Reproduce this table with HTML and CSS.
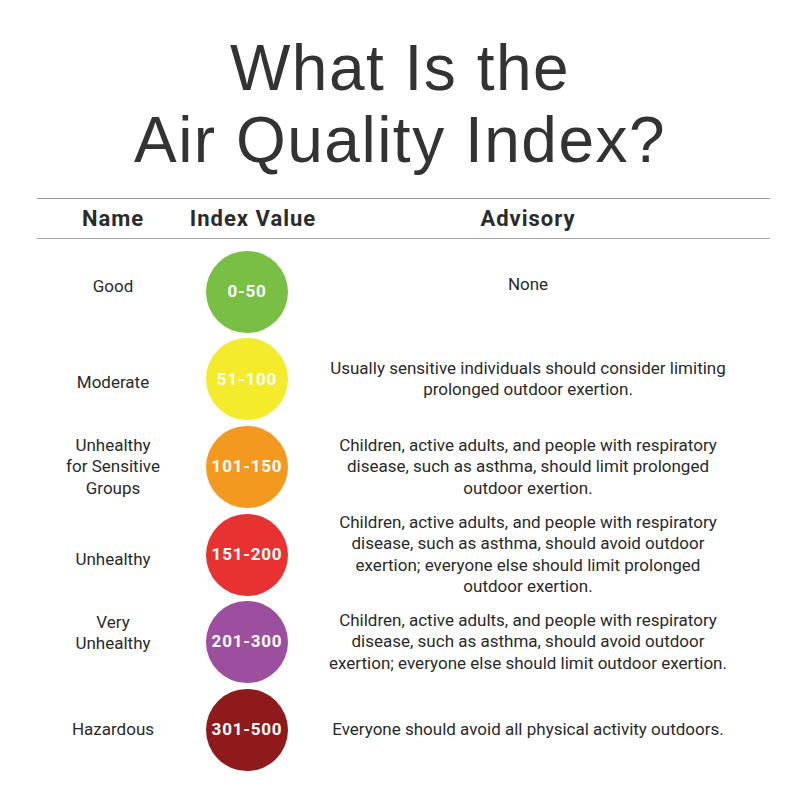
FILE: index.html
```html
<!DOCTYPE html>
<html>
<head>
<meta charset="utf-8">
<link rel="stylesheet" href="styles.css">
</head>
<body>
<main class="page">
  <h1 class="title">What Is the<br>Air Quality Index?</h1>
  <section class="table">
    <div class="head">
      <div class="h-name">Name</div>
      <div class="h-index"><span>Index Value</span></div>
      <div class="h-adv">Advisory</div>
    </div>
    <div class="rows">
      <div class="row">
        <div class="name name-good">Good</div>
        <div class="cell-dot"><span class="dot good">0-50</span></div>
        <div class="adv adv-good">None</div>
      </div>
      <div class="row">
        <div class="name name-mod">Moderate</div>
        <div class="cell-dot"><span class="dot moderate">51-100</span></div>
        <div class="adv">Usually sensitive individuals should consider limiting<br>prolonged outdoor exertion.</div>
      </div>
      <div class="row">
        <div class="name">Unhealthy<br>for Sensitive<br>Groups</div>
        <div class="cell-dot"><span class="dot sensitive">101-150</span></div>
        <div class="adv">Children, active adults, and people with respiratory<br>disease, such as asthma, should limit prolonged<br>outdoor exertion.</div>
      </div>
      <div class="row">
        <div class="name name-unh">Unhealthy</div>
        <div class="cell-dot"><span class="dot unhealthy">151-200</span></div>
        <div class="adv">Children, active adults, and people with respiratory<br>disease, such as asthma, should avoid outdoor<br>exertion; everyone else should limit prolonged<br>outdoor exertion.</div>
      </div>
      <div class="row">
        <div class="name name-very">Very<br>Unhealthy</div>
        <div class="cell-dot"><span class="dot very">201-300</span></div>
        <div class="adv">Children, active adults, and people with respiratory<br>disease, such as asthma, should avoid outdoor<br>exertion; everyone else should limit outdoor exertion.</div>
      </div>
      <div class="row">
        <div class="name">Hazardous</div>
        <div class="cell-dot"><span class="dot hazardous">301-500</span></div>
        <div class="adv">Everyone should avoid all physical activity outdoors.</div>
      </div>
    </div>
  </section>
</main>
</body>
</html>
```

FILE: styles.css
```css
* { box-sizing: border-box; }
html, body { margin: 0; padding: 0; background: #ffffff; }
body { width: 800px; height: 800px; overflow: hidden; }

.page {
  padding: 32px 30px 0 37px;
  display: flex;
  flex-direction: column;
}

.title {
  margin: 0;
  text-align: center;
  font-family: "Liberation Sans", Arial, sans-serif;
  font-weight: 400;
  font-size: 64px;
  line-height: 72px;
  letter-spacing: 1.5px;
  color: #333333;
  padding-right: 7px;
}

.table {
  margin-top: 22px;
  width: 733px;
}

.head {
  display: grid;
  grid-template-columns: 152px 116px 1fr;
  height: 41px;
  align-items: center;
  border-top: 1.5px solid #9a9a9a;
  border-bottom: 1.5px solid #a8a8a8;
  font-family: Roboto, "Liberation Sans", sans-serif;
  font-weight: 700;
  font-size: 22px;
  color: #2b2b2b;
  letter-spacing: 1px;
}
.h-name { text-align: center; }
.h-index { display: flex; justify-content: center; padding-left: 12px; white-space: nowrap; }
.h-index span { flex: none; }
.h-adv { text-align: center; padding-right: 19px; }

.rows {
  padding-top: 9px;
  display: grid;
  grid-auto-rows: 87.6px;
}

.row {
  display: grid;
  grid-template-columns: 152px 116px 1fr;
  align-items: center;
  font-family: Roboto, "Liberation Sans", sans-serif;
  font-size: 17px;
  line-height: 21.5px;
  color: #2a2a2a;
  letter-spacing: 0;
}

.name { text-align: center; }
.name-good { margin-top: -10px; }
.name-very { margin-top: -18px; }
.name-unh { margin-top: 10px; }
.name-mod { margin-top: 6px; }

.cell-dot { display: flex; justify-content: center; }

.dot {
  width: 82px;
  height: 82px;
  border-radius: 50%;
  display: flex;
  align-items: center;
  justify-content: center;
  color: #ffffff;
  font-family: Roboto, "Liberation Sans", sans-serif;
  font-weight: 700;
  font-size: 17px;
  letter-spacing: 0.8px;
}
.good { background: #79bf43; }
.moderate { background: #f3eb2b; }
.sensitive { background: #f4991f; }
.unhealthy { background: #e83232; }
.very { background: #9c4f9e; }
.hazardous { background: #8f1a1c; }

.adv { text-align: center; padding-right: 19px; }
.adv-good { margin-top: -14px; }
```
